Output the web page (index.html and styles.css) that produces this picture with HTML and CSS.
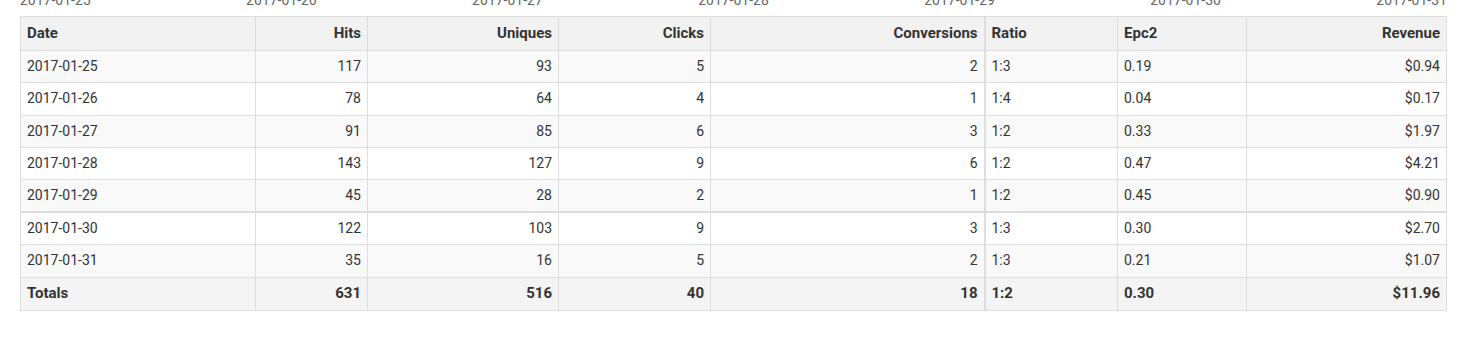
FILE: index.html
```html
<!DOCTYPE html>
<html>
<head>
    <title>Daily Stats</title>
    <link rel="stylesheet" href="styles.css">
</head>
<body>
    <div class="container">
        <div class="axis">
            <span>2017-01-25</span>
            <span>2017-01-26</span>
            <span>2017-01-27</span>
            <span>2017-01-28</span>
            <span>2017-01-29</span>
            <span>2017-01-30</span>
            <span>2017-01-31</span>
        </div>

        <table class="stats">
            <colgroup>
                <col class="c-date">
                <col class="c-hits">
                <col class="c-uniques">
                <col class="c-clicks">
                <col class="c-conv">
                <col class="c-ratio">
                <col class="c-epc">
                <col class="c-rev">
            </colgroup>
            <thead>
                <tr>
                    <th>Date</th>
                    <th class="num">Hits</th>
                    <th class="num">Uniques</th>
                    <th class="num">Clicks</th>
                    <th class="num split">Conversions</th>
                    <th>Ratio</th>
                    <th>Epc2</th>
                    <th class="num">Revenue</th>
                </tr>
            </thead>
            <tbody>
                <tr>
                    <td>2017-01-25</td><td class="num">117</td><td class="num">93</td><td class="num">5</td>
                    <td class="num split">2</td><td>1:3</td><td>0.19</td><td class="num">$0.94</td>
                </tr>
                <tr>
                    <td>2017-01-26</td><td class="num">78</td><td class="num">64</td><td class="num">4</td>
                    <td class="num split">1</td><td>1:4</td><td>0.04</td><td class="num">$0.17</td>
                </tr>
                <tr>
                    <td>2017-01-27</td><td class="num">91</td><td class="num">85</td><td class="num">6</td>
                    <td class="num split">3</td><td>1:2</td><td>0.33</td><td class="num">$1.97</td>
                </tr>
                <tr>
                    <td>2017-01-28</td><td class="num">143</td><td class="num">127</td><td class="num">9</td>
                    <td class="num split">6</td><td>1:2</td><td>0.47</td><td class="num">$4.21</td>
                </tr>
                <tr>
                    <td>2017-01-29</td><td class="num">45</td><td class="num">28</td><td class="num">2</td>
                    <td class="num split">1</td><td>1:2</td><td>0.45</td><td class="num">$0.90</td>
                </tr>
                <tr class="week-break">
                    <td>2017-01-30</td><td class="num">122</td><td class="num">103</td><td class="num">9</td>
                    <td class="num split">3</td><td>1:3</td><td>0.30</td><td class="num">$2.70</td>
                </tr>
                <tr>
                    <td>2017-01-31</td><td class="num">35</td><td class="num">16</td><td class="num">5</td>
                    <td class="num split">2</td><td>1:3</td><td>0.21</td><td class="num">$1.07</td>
                </tr>
            </tbody>
            <tfoot>
                <tr>
                    <th>Totals</th>
                    <th class="num">631</th>
                    <th class="num">516</th>
                    <th class="num">40</th>
                    <th class="num split">18</th>
                    <th>1:2</th>
                    <th>0.30</th>
                    <th class="num">$11.96</th>
                </tr>
            </tfoot>
        </table>
    </div>
</body>
</html>
```

FILE: styles.css
```css
body {
    margin: 0;
    font-family: Roboto, "Liberation Sans", Arial, sans-serif;
    font-size: 14px;
    color: #333;
    background: #fff;
}
.container {
    padding: 0 10px 0 20px;
}
.axis {
    height: 16px;
    overflow: hidden;
    display: flex;
    justify-content: space-between;
    align-items: flex-start;
    color: #666;
}
.axis span {
    line-height: 14px;
    margin-top: -7px;
}
.stats {
    width: 100%;
    border-collapse: collapse;
    table-layout: fixed;
}
.c-date { width: 235px; }
.c-hits { width: 112px; }
.c-uniques { width: 191px; }
.c-clicks { width: 152px; }
.c-conv { width: 274px; }
.c-ratio { width: 133px; }
.c-epc { width: 129px; }
.c-rev { width: 200px; }
.stats th,
.stats td {
    border: 1px solid #ddd;
    padding: 6px 6px;
    line-height: 19.2px;
    text-align: left;
    white-space: nowrap;
}
.stats th {
    font-weight: bold;
    font-size: 15px;
}
.stats thead th {
    background: #f2f2f2;
    padding-top: 7px;
    padding-bottom: 7px;
}
.stats tbody tr:nth-child(odd) td {
    background: #f9f9f9;
}
.stats tbody tr:nth-child(even) td {
    background: #fff;
}
.stats tfoot th {
    background: #f4f4f4;
    padding-top: 6.5px;
    padding-bottom: 6.5px;
}
.stats .num {
    text-align: right;
}
.stats .split {
    border-right-width: 2px;
}
.stats .week-break td {
    border-top-width: 2px;
}
```
